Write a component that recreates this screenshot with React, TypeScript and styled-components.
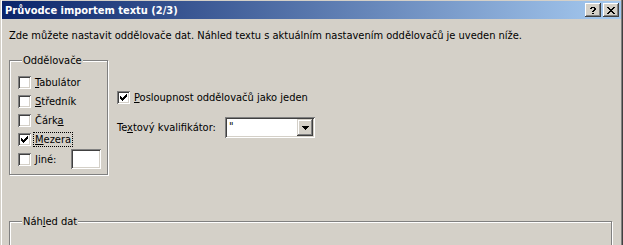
import styled, { createGlobalStyle } from "styled-components";

const GlobalStyle = createGlobalStyle`
  html, body {
    margin: 0;
    padding: 0;
    background: #d4d0c8;
  }
  body {
    font-family: "DejaVu Sans Condensed", "DejaVu Sans", sans-serif;
    font-size: 11px;
    color: #000;
  }
`;

const Window = styled.div`
  width: 623px;
  height: 245px;
  box-sizing: border-box;
  overflow: hidden;
  padding: 1px 2px 0 2px;
  background: #d4d0c8;
  box-shadow: inset 1px 0 #d4d0c8, inset 2px 0 #fff, inset -1px 0 #404040,
    inset -2px 0 #808080;
`;

const TitleBar = styled.div`
  height: 18px;
  display: flex;
  align-items: center;
  padding: 0 2px 0 3px;
  background: linear-gradient(to right, #0a246a, #a6caf0);
`;

const Title = styled.span`
  color: #fff;
  font-weight: bold;
  font-size: 11px;
  line-height: 13px;
  white-space: nowrap;
`;

const TitleButtons = styled.div`
  margin-left: auto;
  display: flex;
  gap: 2px;
`;

const CaptionButton = styled.div`
  width: 16px;
  height: 14px;
  box-sizing: border-box;
  display: flex;
  align-items: center;
  justify-content: center;
  background: #d4d0c8;
  box-shadow: inset -1px -1px #404040, inset 1px 1px #fff, inset -2px -2px #808080,
    inset 2px 2px #d4d0c8;
  svg {
    display: block;
    shape-rendering: crispEdges;
  }
`;

const Body = styled.div`
  padding: 10px 9px 0 7px;
`;

const Intro = styled.p`
  margin: 0;
  line-height: 13px;
  white-space: nowrap;
`;

const Row = styled.div`
  display: flex;
  align-items: flex-start;
`;

const Group = styled.fieldset<{ $width?: number; $height?: number }>`
  margin: 0;
  min-width: 0;
  box-sizing: border-box;
  width: ${(p) => (p.$width ? `${p.$width}px` : "auto")};
  ${(p) => (p.$height ? `height: ${p.$height}px;` : "")}
  border: 1px solid #808080;
  box-shadow: 1px 1px 0 #fff, inset 1px 1px 0 #fff;
  padding: 6px 6px 5px 8px;
`;

const GroupLabel = styled.legend`
  padding: 0 1px;
  margin-left: 4px;
  line-height: 13px;
  background: #d4d0c8;
`;

const CheckRow = styled.div`
  display: flex;
  align-items: center;
  min-height: 19px;
`;

const Box = styled.span`
  width: 13px;
  height: 13px;
  flex: none;
  box-sizing: border-box;
  background: #fff;
  box-shadow: inset 1px 1px #808080, inset -1px -1px #fff, inset 2px 2px #404040,
    inset -2px -2px #d4d0c8;
  display: flex;
  align-items: center;
  justify-content: center;
  svg {
    display: block;
    shape-rendering: crispEdges;
  }
`;

const Caption = styled.span<{ $focused?: boolean }>`
  margin-left: 2px;
  padding: 0 1px;
  line-height: 13px;
  border: 1px dotted ${(p) => (p.$focused ? "#000" : "transparent")};
  white-space: nowrap;
`;

const Field = styled.span`
  margin-left: auto;
  width: 30px;
  height: 20px;
  box-sizing: border-box;
  background: #fff;
  box-shadow: inset 1px 1px #808080, inset -1px -1px #fff, inset 2px 2px #404040,
    inset -2px -2px #d4d0c8;
`;

const Options = styled.div`
  margin-left: 9px;
  padding-top: 34px;
  display: flex;
  flex-direction: column;
  gap: 10px;
`;

const OptionRow = styled.div`
  display: flex;
  align-items: center;
`;

const FieldLabel = styled.span`
  width: 108px;
  line-height: 13px;
  white-space: nowrap;
`;

const Combo = styled.div`
  width: 90px;
  height: 21px;
  box-sizing: border-box;
  padding: 2px;
  display: flex;
  background: #fff;
  box-shadow: inset 1px 1px #808080, inset -1px -1px #fff, inset 2px 2px #404040,
    inset -2px -2px #d4d0c8;
`;

const ComboValue = styled.span`
  flex: 1;
  padding-left: 2px;
  line-height: 15px;
`;

const DropButton = styled.span`
  width: 16px;
  height: 17px;
  box-sizing: border-box;
  background: #d4d0c8;
  box-shadow: inset -1px -1px #404040, inset 1px 1px #d4d0c8, inset -2px -2px #808080,
    inset 2px 2px #fff;
  display: flex;
  align-items: center;
  justify-content: center;
  svg {
    display: block;
    shape-rendering: crispEdges;
  }
`;

const PreviewGroup = styled(Group)`
  margin-top: 40px;
  height: 60px;
`;

function HelpGlyph() {
  return (
    <svg width="6" height="7" viewBox="0 0 6 7">
      <path
        fill="#000"
        d="M1 0h4v1H1zM0 1h2v1H0zM4 1h2v2H4zM3 3h2v1H3zM2 4h2v1H2zM2 6h2v1H2z"
      />
    </svg>
  );
}

function CloseGlyph() {
  return (
    <svg width="8" height="7" viewBox="0 0 8 7">
      <path
        fill="#000"
        d="M0 0h2v1H0zM6 0h2v1H6zM1 1h2v1H1zM5 1h2v1H5zM2 2h4v1H2zM3 3h2v1H3zM2 4h4v1H2zM1 5h2v1H1zM5 5h2v1H5zM0 6h2v1H0zM6 6h2v1H6z"
      />
    </svg>
  );
}

function CheckGlyph() {
  return (
    <svg width="7" height="7" viewBox="0 0 7 7">
      <path
        fill="#000"
        d="M6 0h1v3H6zM5 1h1v3H5zM4 2h1v3H4zM0 2h1v3H0zM1 3h1v3H1zM3 3h1v3H3zM2 4h1v3H2z"
      />
    </svg>
  );
}

function ArrowGlyph() {
  return (
    <svg width="7" height="4" viewBox="0 0 7 4">
      <path fill="#000" d="M0 0h7v1H0zM1 1h5v1H1zM2 2h3v1H2zM3 3h1v1H3z" />
    </svg>
  );
}

function Check({ checked }: { checked?: boolean }) {
  return <Box>{checked ? <CheckGlyph /> : null}</Box>;
}

export default function App() {
  return (
    <>
      <GlobalStyle />
      <Window>
        <TitleBar>
          <Title>Průvodce importem textu (2/3)</Title>
          <TitleButtons>
            <CaptionButton>
              <HelpGlyph />
            </CaptionButton>
            <CaptionButton>
              <CloseGlyph />
            </CaptionButton>
          </TitleButtons>
        </TitleBar>
        <Body>
          <Intro>
            Zde můžete nastavit oddělovače dat. Náhled textu s aktuálním nastavením
            oddělovačů je uveden níže.
          </Intro>
          <Row>
            <Group $width={99} style={{ marginTop: 12 }}>
              <GroupLabel>Oddělovače</GroupLabel>
              <CheckRow>
                <Check />
                <Caption>
                  <u>T</u>abulátor
                </Caption>
              </CheckRow>
              <CheckRow>
                <Check />
                <Caption>
                  <u>S</u>tředník
                </Caption>
              </CheckRow>
              <CheckRow>
                <Check />
                <Caption>
                  Čárk<u>a</u>
                </Caption>
              </CheckRow>
              <CheckRow>
                <Check checked />
                <Caption $focused>
                  <u>M</u>ezera
                </Caption>
              </CheckRow>
              <CheckRow>
                <Check />
                <Caption>
                  <u>J</u>iné:
                </Caption>
                <Field />
              </CheckRow>
            </Group>
            <Options style={{ marginTop: 12 }}>
              <CheckRow>
                <Check checked />
                <Caption>
                  <u>P</u>osloupnost oddělovačů jako jeden
                </Caption>
              </CheckRow>
              <OptionRow>
                <FieldLabel>
                  Te<u>x</u>tový kvalifikátor:
                </FieldLabel>
                <Combo>
                  <ComboValue>"</ComboValue>
                  <DropButton>
                    <ArrowGlyph />
                  </DropButton>
                </Combo>
              </OptionRow>
            </Options>
          </Row>
          <PreviewGroup>
            <GroupLabel>
              Náh<u>l</u>ed dat
            </GroupLabel>
          </PreviewGroup>
        </Body>
      </Window>
    </>
  );
}
